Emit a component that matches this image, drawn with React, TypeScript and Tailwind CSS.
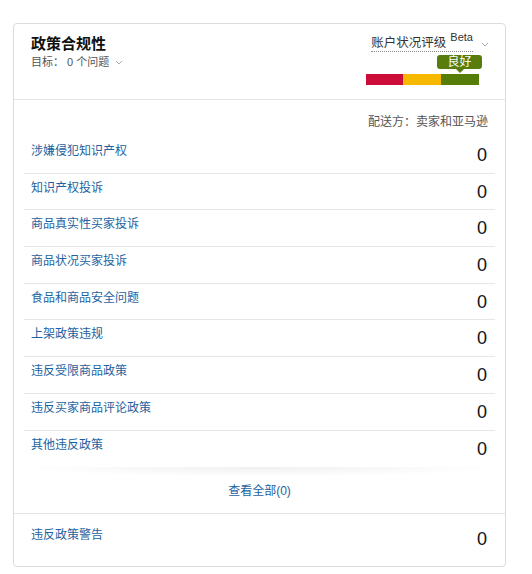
const rows = [
  '涉嫌侵犯知识产权',
  '知识产权投诉',
  '商品真实性买家投诉',
  '商品状况买家投诉',
  '食品和商品安全问题',
  '上架政策违规',
  '违反受限商品政策',
  '违反买家商品评论政策',
  '其他违反政策',
];

function Chevron({ className }: { className?: string }) {
  return (
    <svg width="8" height="5" viewBox="0 0 8 5" className={className}>
      <path d="M1 1l3 3 3-3" fill="none" stroke="#aaa" strokeWidth="1" />
    </svg>
  );
}

export default function App() {
  return (
    <div
      className="w-[532px] h-[574px] bg-white pt-[23px] pl-[13px] text-[#111]"
      style={{ fontFamily: '"Liberation Sans", "Noto Sans CJK SC", sans-serif' }}
    >
      <div className="w-[493px] border border-[#dcdcdc] rounded-[4px]">
        {/* Header */}
        <div className="h-[76px] border-b border-[#e3e3e3] flex justify-between">
          <div className="pl-[17px] pt-[10px]">
            <h2 className="text-[15px] leading-[20px] font-bold">政策合规性</h2>
            <div className="flex items-center gap-[6px] text-[11px] leading-[16px] text-[#555]">
              <span>目标： 0 个问题</span>
              <Chevron />
            </div>
          </div>

          <div className="pr-[16px] pt-[12px] flex flex-col items-end">
            <div className="flex items-center gap-[8px]">
              <div className="flex items-start border-b border-dotted border-[#888] leading-[15px]">
                <span className="text-[12.5px] text-[#333]">账户状况评级</span>
                <span className="ml-[4px] text-[11px] leading-[11px] -mt-[4px] text-[#333]">Beta</span>
              </div>
              <Chevron />
            </div>
            <div className="mr-[10px] mt-[3px] w-[113px] flex flex-col">
              <div className="flex justify-end">
                <div className="relative w-[45px] h-[14px] -mr-[3px] rounded-[3px] bg-[#587d0d] text-white text-[12px] leading-[14px] text-center">
                  良好
                  <span className="absolute left-1/2 -translate-x-1/2 top-[14px] w-0 h-0 border-l-[4px] border-r-[4px] border-t-[4px] border-l-transparent border-r-transparent border-t-[#587d0d]" />
                </div>
              </div>
              <div className="mt-[5px] flex h-[11px]">
                <div className="w-[37px] bg-[#cc0c39]" />
                <div className="w-[38px] bg-[#f6b900]" />
                <div className="w-[38px] bg-[#567c0a]" />
              </div>
            </div>
          </div>
        </div>

        {/* Body */}
        <div className="px-[10px]">
          <div className="pt-[14px] pb-[7px] pr-[7px] text-right text-[12px] leading-[16px] text-[#555]">
            配送方：卖家和亚马逊
          </div>
          {rows.map((label, i) => (
            <div
              key={label}
              className={`h-[36.7px] flex justify-between items-start pl-[7px] pr-[8px] ${
                i < rows.length - 1 ? 'border-b border-[#e6e6e6]' : ''
              }`}
            >
              <span className="mt-[6px] text-[12px] leading-[16px] text-[#1d62a0]">{label}</span>
              <span className="mt-[7px] text-[18px] leading-[22px] text-[#111]">0</span>
            </div>
          ))}
        </div>

        {/* View all */}
        <div className="h-[46px] flex flex-col">
          <div className="h-[10px] bg-[radial-gradient(ellipse_at_top,rgba(0,0,0,0.06),transparent_70%)]" />
          <div className="flex-1 flex justify-center pt-[6px] text-[12px] leading-[16px] text-[#1d62a0]">
            查看全部(0)
          </div>
        </div>

        {/* Warnings */}
        <div className="h-[53px] border-t border-[#e3e3e3] flex justify-between items-start pl-[17px] pr-[18px]">
          <span className="mt-[13px] text-[12px] leading-[16px] text-[#1d62a0]">违反政策警告</span>
          <span className="mt-[14px] text-[18px] leading-[22px] text-[#111]">0</span>
        </div>
      </div>
    </div>
  );
}
